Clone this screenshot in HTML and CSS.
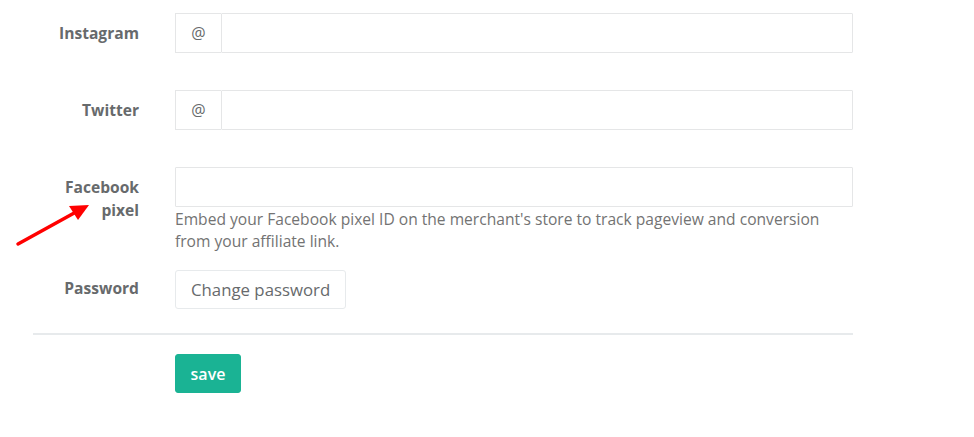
FILE: index.html
```html
<!DOCTYPE html>
<html lang="en">
<head>
  <meta charset="UTF-8">
  <title>Profile settings</title>
  <meta name="viewport" content="width=device-width, initial-scale=1.0">
  <link rel="stylesheet" href="styles.css">
</head>
<body>

  <form class="settings">
    <div class="form-group">
      <label class="control-label" for="instagram">Instagram</label>
      <div class="field">
        <div class="input-group">
          <span class="addon">@</span>
          <input type="text" id="instagram" class="form-control">
        </div>
      </div>
    </div>

    <div class="form-group">
      <label class="control-label" for="twitter">Twitter</label>
      <div class="field">
        <div class="input-group">
          <span class="addon">@</span>
          <input type="text" id="twitter" class="form-control">
        </div>
      </div>
    </div>

    <div class="form-group has-help">
      <label class="control-label" for="pixel">Facebook pixel</label>
      <div class="field">
        <input type="text" id="pixel" class="form-control">
        <span class="help-block">Embed your Facebook pixel ID on the merchant's store to track pageview and conversion from your affiliate link.</span>
      </div>
    </div>

    <div class="form-group last">
      <label class="control-label">Password</label>
      <div class="field">
        <button type="button" class="btn btn-white">Change password</button>
      </div>
    </div>

    <div class="hr-line"></div>

    <div class="form-group actions">
      <div class="field">
        <button type="submit" class="btn btn-primary">save</button>
      </div>
    </div>
  </form>

  <!-- annotation arrow -->
  <svg class="arrow" width="100" height="60" viewBox="0 0 100 60">
    <line x1="8" y1="49" x2="66" y2="17" stroke="#ff0000" stroke-width="3.5" stroke-linecap="round"/>
    <polygon points="79,10 59,11 68,25" fill="#ff0000"/>
  </svg>

</body>
</html>
```

FILE: styles.css
```css
body {
  margin: 0;
  padding: 13px 0 0 33px;
  background-color: #fff;
  color: #676a6c;
  font-family: "Open Sans", "Liberation Sans", sans-serif;
  font-size: 16px;
}

.settings {
  width: 820px;
}

.form-group {
  display: flex;
  margin-bottom: 37px;
}

.form-group.has-help {
  margin-bottom: 18px;
}

.form-group.last {
  margin-bottom: 24px;
}

.control-label {
  width: 142px;
  flex-shrink: 0;
  box-sizing: border-box;
  padding: 9px 36px 0 15px;
  text-align: right;
  font-weight: 700;
  font-size: 15.6px;
  line-height: 23px;
  color: #676a6c;
}

.last .control-label {
  padding-top: 7px;
}

.field {
  flex: 1;
}

.actions .field {
  margin-left: 142px;
}

.input-group {
  display: flex;
}

.addon {
  width: 46px;
  height: 40px;
  box-sizing: border-box;
  border: 1px solid #e5e6e7;
  border-right: none;
  display: flex;
  align-items: center;
  justify-content: center;
  font-size: 16px;
  color: #676a6c;
}

.form-control {
  display: block;
  width: 100%;
  height: 40px;
  box-sizing: border-box;
  border: 1px solid #e5e6e7;
  border-radius: 1px;
  padding: 6px 12px;
  font-family: inherit;
  font-size: 16px;
  color: #676a6c;
  outline: none;
}

.input-group .form-control {
  flex: 1;
}

.help-block {
  display: block;
  margin-top: 1px;
  line-height: 22px;
  font-size: 15.6px;
  color: #737373;
}

.btn {
  height: 39px;
  padding: 0 15px;
  border-radius: 3px;
  font-family: inherit;
  font-size: 16px;
  cursor: pointer;
}

.btn-white {
  background-color: #fff;
  border: 1px solid #e7eaec;
  color: #676a6c;
  font-size: 16.8px;
}

.btn-primary {
  background-color: #1ab394;
  border: 1px solid #1ab394;
  color: #fff;
  font-weight: 600;
  width: 66px;
  padding: 0;
}

.hr-line {
  height: 2px;
  background-color: #e7eaec;
  margin-bottom: 19px;
}

.arrow {
  position: absolute;
  left: 10px;
  top: 195px;
}
```
